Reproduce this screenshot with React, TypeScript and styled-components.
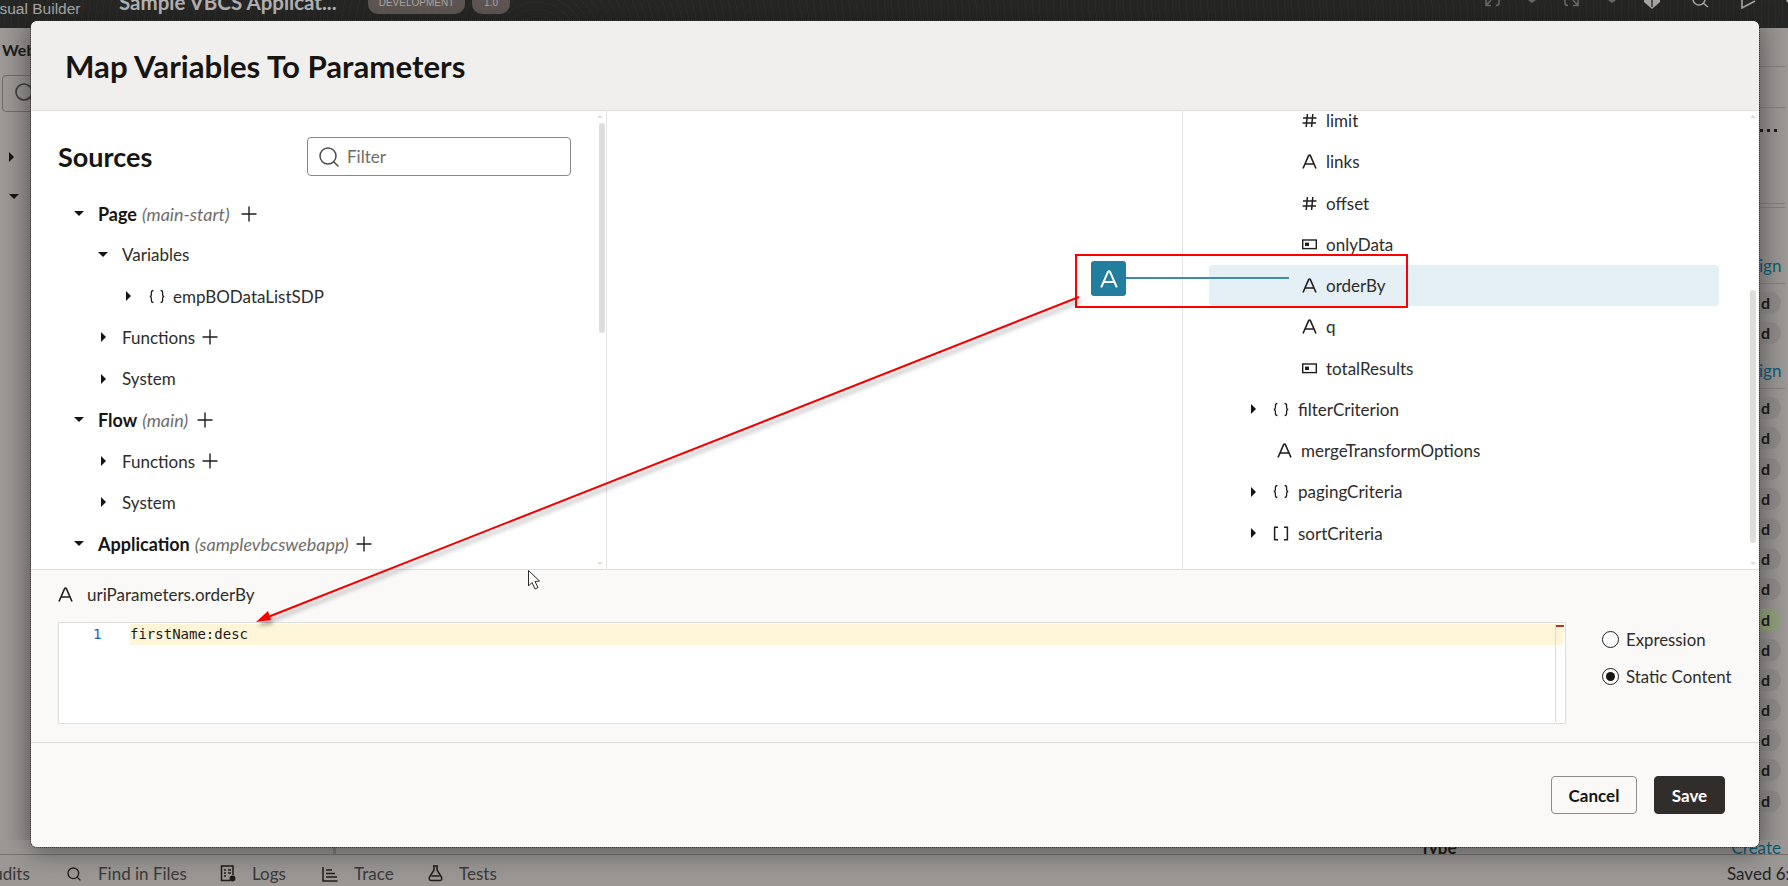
import styled, { createGlobalStyle } from 'styled-components';
import { Search } from 'lucide-react';

const GlobalStyle = createGlobalStyle`
  html, body { margin:0; padding:0; }
  body { font-family:Lato, "Noto Sans", sans-serif; background:#9a9795; }
`;

const Page = styled.div`
  position:relative;
  width:1788px;
  height:886px;
  overflow:hidden;
  display:flex;
  flex-direction:column;
  background:#9a9795;
`;

/* page behind the dialog */
const TopBar = styled.div`
  height:28px;
  flex:none;
  display:flex;
  align-items:flex-start;
  background:repeating-radial-gradient(circle at 30% 160%, #2b2b2a 0 1px, #262625 1px 7px);
  overflow:hidden;
`;

const Product = styled.span`
  font:15.5px/17px "Liberation Sans", sans-serif;
  color:#a8a6a4;
  margin-left:-14px;
  width:133px;
  flex:none;
`;

const AppName = styled.span`
  font-weight:700;
  font-size:20.5px;
  line-height:21px;
  margin-top:-8px;
  color:#b4b2b0;
  width:249px;
  flex:none;
`;

const EnvPill = styled.span<{ $w: number }>`
  width:${p => p.$w}px;
  height:24px;
  margin:-10px 7px 0 0;
  flex:none;
  display:flex;
  align-items:center;
  justify-content:center;
  border-radius:10px;
  background:#5e5652;
  color:#aaa5a1;
  font:10px "Liberation Sans", sans-serif;
`;

const TopIcons = styled.div`
  margin-left:auto;
  width:303px;
  flex:none;
  svg { display:block; }
`;

const Workspace = styled.div`
  flex:1;
  display:flex;
  flex-direction:column;
  min-height:0;
`;

const Gutters = styled.div`
  flex:1;
  display:flex;
  justify-content:space-between;
  min-height:0;
  overflow:hidden;
`;

const LeftGutter = styled.div`
  width:31px;
  overflow:hidden;
  padding:12px 0 0 2px;
  box-sizing:border-box;
  background:linear-gradient(90deg,#9c9997,#8d8a88);
`;

const Crumb = styled.div`
  font-weight:700;
  font-size:16px;
  line-height:20px;
  white-space:nowrap;
  color:#1c1b1a;
`;

const GhostSearch = styled.div`
  margin-top:15px;
  width:60px;
  height:37px;
  box-sizing:border-box;
  padding:5px 0 0 10px;
  border:1px solid #6d6a68;
  border-radius:4px;
  color:#3c3a38;
`;

const GutterCarets = styled.div`
  margin:40px 0 0 7px;
  display:flex;
  flex-direction:column;
  gap:32px;
`;

const RightGutter = styled.div`
  width:29px;
  overflow:hidden;
  box-sizing:border-box;
  background:linear-gradient(90deg,#8f8c8a,#9b9896);
  display:flex;
  flex-direction:column;
`;

const GutterLine = styled.div<{ $top: number }>`
  margin-top:${p => p.$top}px;
  height:1px;
  width:26px;
  flex:none;
  background:#807d7b;
`;

const Dots = styled.div`
  margin:21px 0 0 1px;
  display:flex;
  gap:4px;
  flex:none;
  i { width:3px; height:3px; background:#1c1b1a; }
`;

const LinkTail = styled.div<{ $top: number }>`
  margin-top:${p => p.$top}px;
  flex:none;
  font-size:17px;
  line-height:20px;
  color:#0c5a78;
`;

const Pills = styled.div`
  margin-top:8px;
  flex:none;
  display:flex;
  flex-direction:column;
  gap:8.2px;
`;

const Pill = styled.div<{ $green?: boolean }>`
  width:22px;
  height:22px;
  padding-left:2px;
  box-sizing:border-box;
  border-radius:0 11px 11px 0;
  background:${p => (p.$green ? '#8d9c78' : '#8b8886')};
  color:#1c1b1a;
  font-weight:700;
  font-size:16px;
  line-height:22px;
`;

const DetailStrip = styled.div`
  height:14px;
  flex:none;
  display:flex;
  align-items:center;
  overflow:hidden;
  border-bottom:1px solid #77746f;
  font-size:17px;
`;

const StripDivider = styled.div`
  width:336px;
  height:100%;
  border-right:3px solid #807d7b;
  box-sizing:border-box;
  flex:none;
`;

const StripType = styled.span`
  margin-left:1084px;
  font-weight:700;
  color:#1c1b1a;
`;

const StripCreate = styled.span`
  margin-left:auto;
  margin-right:7px;
  color:#0c5a78;
`;

const StatusBar = styled.div`
  height:31px;
  flex:none;
  box-sizing:border-box;
  padding-top:6px;
  display:flex;
  align-items:center;
  font-size:17px;
  color:#3b3937;
  background:#9a9795;
`;

const StatusTab = styled.span<{ $w: number; $cut?: number }>`
  width:${p => p.$w}px;
  margin-left:${p => p.$cut ?? 0}px;
  flex:none;
  display:flex;
  align-items:center;
  gap:16px;
  svg { flex:none; }
`;

const Saved = styled.span`
  margin-left:auto;
  white-space:nowrap;
  width:61px;
  overflow:hidden;
  color:#252422;
`;

/* dialog */
const DialogShadow = styled.div`
  position:absolute;
  left:31px;
  top:21px;
  width:1728px;
  height:826px;
  border-radius:6px;
  box-shadow:0 6px 26px rgba(0,0,0,.4);
`;

const Dialog = styled.div`
  position:absolute;
  left:31px;
  top:21px;
  width:1728px;
  height:826px;
  display:flex;
  flex-direction:column;
  border-radius:6px;
  overflow:hidden;
  background:#fff;
  outline:1px dotted #3a3836;
`;

const DialogHeader = styled.div`
  height:90px;
  flex:none;
  box-sizing:border-box;
  display:flex;
  align-items:center;
  padding:0 0 0 34px;
  background:#f0efed;
  border-bottom:1px solid #dfdedb;
`;

const DialogTitle = styled.h1`
  margin:0;
  font-weight:700;
  font-size:31.2px;
  color:#161513;
`;

const DialogBody = styled.div`
  height:458px;
  flex:none;
  display:flex;
`;

const Column = styled.div<{ $w: number; $line?: boolean }>`
  position:relative;
  width:${p => p.$w}px;
  flex:none;
  overflow:hidden;
  box-sizing:border-box;
  border-right:${p => (p.$line ? '1px solid #e4e3e1' : 'none')};
`;

const SourcesHead = styled.div`
  display:flex;
  align-items:center;
  justify-content:space-between;
  padding:26px 35px 0 27px;
  height:39px;
`;

const SourcesTitle = styled.h2`
  margin:0;
  font-weight:700;
  font-size:27px;
  color:#161513;
`;

const FilterBox = styled.div`
  width:264px;
  height:39px;
  box-sizing:border-box;
  display:flex;
  align-items:center;
  gap:6px;
  padding-left:9px;
  border:1px solid #8a8785;
  border-radius:4px;
  color:#4e4c4a;
  font-size:17px;
  span { color:#6f6d6b; }
`;

const TreeList = styled.div<{ $top: number }>`
  margin-top:${p => p.$top}px;
`;

const TreeRow = styled.div<{ $indent: number; $selected?: boolean; $wide?: boolean }>`
  height:41.25px;
  box-sizing:border-box;
  display:flex;
  align-items:center;
  padding-left:${p => p.$indent}px;
  margin-left:${p => (p.$wide ? 26 : 0)}px;
  width:${p => (p.$wide ? '510px' : 'auto')};
  font-size:17px;
  color:#2e2c2a;
  border-radius:4px;
  background:${p => (p.$selected ? '#e4f0f6' : 'transparent')};
`;

const CaretSlot = styled.span`
  width:24px;
  flex:none;
  display:flex;
  justify-content:center;
`;

const SourceCaretSlot = styled(CaretSlot)`
  margin-right:7px;
`;

const Caret = styled.i<{ $open?: boolean }>`
  display:block;
  width:0;
  height:0;
  border-style:solid;
  border-color:transparent;
  ${p => (p.$open
    ? 'border-width:5px 5px 0 5px; border-top-color:#161513;'
    : 'border-width:5px 0 5px 5px; border-left-color:#161513;')}
`;

const IconSlot = styled.span<{ $ml?: number; $mr?: number }>`
  display:flex;
  flex:none;
  margin-left:${p => p.$ml ?? 0}px;
  margin-right:${p => p.$mr ?? 9}px;
`;

const Strong = styled.b`
  font-weight:700;
  font-size:18px;
  color:#161513;
`;

const Muted = styled.em`
  margin-left:5px;
  font-size:18px;
  color:#6f6d6b;
`;

const AddIcon = styled.span<{ $ml?: number }>`
  display:flex;
  margin-left:${p => p.$ml ?? 7}px;
`;

const ScrollTrack = styled.div<{ $right: number; $top: number; $h: number }>`
  position:absolute;
  right:${p => p.$right}px;
  top:${p => p.$top}px;
  width:6px;
  height:${p => p.$h}px;
  border-radius:3px;
  background:#dedddb;
`;

const ScrollArrow = styled.i<{ $right: number; $down?: boolean }>`
  position:absolute;
  right:${p => p.$right}px;
  ${p => (p.$down ? 'bottom:4px;' : 'top:4px;')}
  width:0;
  height:0;
  border-style:solid;
  border-color:transparent;
  ${p => (p.$down
    ? 'border-width:3px 3px 0 3px; border-top-color:#dedddb;'
    : 'border-width:0 3px 3px 3px; border-bottom-color:#dedddb;')}
`;

const DialogFooter = styled.div`
  flex:1;
  display:flex;
  flex-direction:column;
  background:#faf9f7;
  border-top:1px solid #dfdedb;
`;

const ExpressionArea = styled.div`
  height:173px;
  flex:none;
  box-sizing:border-box;
  border-bottom:1px solid #dcdbd8;
  padding:13px 0 0 27px;
`;

const TargetName = styled.div`
  height:22px;
  display:flex;
  align-items:center;
  font-size:17px;
  color:#2e2c2a;
`;

const EditorRow = styled.div`
  margin-top:17px;
  display:flex;
`;

const Editor = styled.div`
  position:relative;
  width:1508px;
  height:102px;
  flex:none;
  box-sizing:border-box;
  padding-top:1px;
  display:flex;
  align-items:flex-start;
  background:#fff;
  border:1px solid #dfdedb;
`;

const LineNumber = styled.div`
  width:71px;
  flex:none;
  box-sizing:border-box;
  padding-left:34px;
  font:14px/21px "DejaVu Sans Mono", monospace;
  color:#1d5cc4;
`;

const CodeLine = styled.div`
  width:1433px;
  height:21px;
  font:14px/21px "DejaVu Sans Mono", monospace;
  color:#1a1918;
  background:#fff5d9;
`;

const OverviewRuler = styled.div`
  position:absolute;
  right:9px;
  top:1px;
  bottom:1px;
  width:1px;
  background:#dcdbd8;
  &::after {
    content:'';
    position:absolute;
    left:1px;
    top:1px;
    width:8px;
    height:2px;
    background:#a9382f;
  }
`;

const RadioGroup = styled.div`
  margin:7px 0 0 36px;
  display:flex;
  flex-direction:column;
  gap:16px;
`;

const RadioRow = styled.label`
  display:flex;
  align-items:center;
  gap:7px;
  height:21px;
  font-size:16.8px;
  color:#2e2c2a;
`;

const RadioMark = styled.span<{ $on?: boolean }>`
  width:17px;
  height:17px;
  box-sizing:border-box;
  border:1.5px solid #1f1e1c;
  border-radius:50%;
  background:#fff;
  display:flex;
  align-items:center;
  justify-content:center;
  &::after {
    content:'';
    width:9px;
    height:9px;
    border-radius:50%;
    background:${p => (p.$on ? '#161513' : 'transparent')};
  }
`;

const DialogActions = styled.div`
  display:flex;
  justify-content:flex-end;
  gap:17px;
  padding:33px 34px 0 0;
`;

const Button = styled.button<{ $primary?: boolean }>`
  height:38px;
  width:${p => (p.$primary ? 71 : 86)}px;
  border-radius:4px;
  border:1px solid ${p => (p.$primary ? '#312d2a' : '#8f8c89')};
  background:${p => (p.$primary ? '#312d2a' : 'transparent')};
  color:${p => (p.$primary ? '#fff' : '#161513')};
  font-family:inherit;
  font-weight:700;
  font-size:17px;
`;

/* mapping diagram + annotations on top of the dialog */
const MapNode = styled.div`
  position:absolute;
  left:1091px;
  top:261px;
  width:35px;
  height:35px;
  border-radius:3px;
  display:flex;
  align-items:center;
  justify-content:center;
  background:#227e9e;
`;

const MapLine = styled.div`
  position:absolute;
  left:1126px;
  top:277px;
  width:163px;
  height:2px;
  background:#3d8cab;
`;

const RedBox = styled.div`
  position:absolute;
  left:1075px;
  top:254px;
  width:333px;
  height:54px;
  box-sizing:border-box;
  border:2px solid #ff0000;
`;

const Overlay = styled.svg`
  position:absolute;
  left:0;
  top:0;
  pointer-events:none;
`;

const AGlyph = ({ color = '#1f1e1c', size = 15, w = 1.6 }: { color?: string; size?: number; w?: number }) => (
  <svg width={size} height={size} viewBox="0 0 15 15" fill="none" stroke={color} strokeWidth={w}>
    <path d="M1 14.5 L6.6 1.6 Q7.5 .4 8.4 1.6 L14 14.5 M3.4 10 H11.6" />
  </svg>
);

const HashGlyph = () => (
  <svg width="15" height="15" viewBox="0 0 15 15" fill="none" stroke="#1f1e1c" strokeWidth="1.5">
    <path d="M5.4 1 L4.2 14 M10.8 1 L9.6 14 M1 5 H14.5 M.6 10 H14" />
  </svg>
);

const DataGlyph = () => (
  <svg width="15" height="15" viewBox="0 0 15 15" fill="none">
    <rect x=".7" y="3" width="13.6" height="8.6" stroke="#1f1e1c" strokeWidth="1.4" />
    <rect x="3" y="5.6" width="4" height="3.4" fill="#1f1e1c" />
  </svg>
);

const BraceGlyph = () => (
  <svg width="16" height="15" viewBox="0 0 16 15" fill="none" stroke="#1f1e1c" strokeWidth="1.3">
    <path d="M4.4 1.5 Q2.4 1.5 2.4 3.4 V5.8 Q2.4 7.4 .8 7.5 Q2.4 7.6 2.4 9.2 V11.6 Q2.4 13.5 4.4 13.5" />
    <path d="M11.6 1.5 Q13.6 1.5 13.6 3.4 V5.8 Q13.6 7.4 15.2 7.5 Q13.6 7.6 13.6 9.2 V11.6 Q13.6 13.5 11.6 13.5" />
  </svg>
);

const BracketGlyph = () => (
  <svg width="16" height="15" viewBox="0 0 16 15" fill="none" stroke="#1f1e1c" strokeWidth="1.5">
    <path d="M5 1.2 H1.6 V13.8 H5 M11 1.2 H14.4 V13.8 H11" />
  </svg>
);

const PlusGlyph = () => (
  <svg width="16" height="16" viewBox="0 0 16 16" stroke="#1f1e1c" strokeWidth="1.4">
    <path d="M8 .5 V15.5 M.5 8 H15.5" />
  </svg>
);

const fieldIcons: Record<string, JSX.Element> = {
  hash: <HashGlyph />,
  text: <AGlyph />,
  data: <DataGlyph />,
};

const fields = [
  { name: 'limit', icon: 'hash' },
  { name: 'links', icon: 'text' },
  { name: 'offset', icon: 'hash' },
  { name: 'onlyData', icon: 'data' },
  { name: 'orderBy', icon: 'text', selected: true },
  { name: 'q', icon: 'text' },
  { name: 'totalResults', icon: 'data' },
];

const pillRows = [false, false, false, false, false, false, false, true, false, false, false, false, false, false];

export default function App() {
  return (
    <Page>
      <GlobalStyle />
      <TopBar>
        <Product>Visual Builder</Product>
        <AppName>Sample VBCS Applicat...</AppName>
        <EnvPill $w={97}>DEVELOPMENT</EnvPill>
        <EnvPill $w={38}>1.0</EnvPill>
        <TopIcons>
          <svg width="303" height="12" viewBox="0 0 303 12" fill="none">
            <g stroke="#6a6765" strokeWidth="1.6">
              <path d="M1 0 V5.5 H6 M1.5 5 L6 0 M14 0 V3 Q14 5.5 11 5.5" />
              <path d="M93 0 V5.5 H88 M92.5 5 L88 0 M80 0 V3 Q80 5.5 83 5.5" />
            </g>
            <path d="M43 0 L47 3 L51 0 Z M123 0 L127 3 L131 0 Z" fill="#6a6765" />
            <path d="M159 0 H175 V2 L167 9 L159 2 Z" fill="#a8a6a4" />
            <path d="M167 0 V7" stroke="#2a2a2a" strokeWidth="1.4" />
            <circle cx="214" cy="-1" r="6" stroke="#a8a6a4" strokeWidth="1.6" />
            <path d="M218 3 L223 7" stroke="#a8a6a4" strokeWidth="1.6" />
            <path d="M257 0 V8 L270 1" stroke="#a8a6a4" strokeWidth="1.6" />
            <circle cx="305" cy="-1" r="4" fill="#a8a6a4" />
          </svg>
        </TopIcons>
      </TopBar>
      <Workspace>
        <Gutters>
          <LeftGutter>
            <Crumb>Web</Crumb>
            <GhostSearch><Search size={24} strokeWidth={1.6} /></GhostSearch>
            <GutterCarets>
              <Caret />
              <Caret $open />
            </GutterCarets>
          </LeftGutter>
          <RightGutter>
            <GutterLine $top={38} />
            <GutterLine $top={40} />
            <Dots><i /><i /><i /></Dots>
            <GutterLine $top={71} />
            <GutterLine $top={3} />
            <LinkTail $top={48}>ign</LinkTail>
            <GutterLine $top={7} />
            <Pills>
              {pillRows.slice(0, 2).map((g, i) => <Pill key={i} $green={g}>d</Pill>)}
            </Pills>
            <LinkTail $top={17}>ign</LinkTail>
            <GutterLine $top={7} />
            <Pills>
              {pillRows.map((g, i) => <Pill key={i} $green={g}>d</Pill>)}
            </Pills>
          </RightGutter>
        </Gutters>
        <DetailStrip>
          <StripDivider />
          <StripType>Type</StripType>
          <StripCreate>Create</StripCreate>
        </DetailStrip>
      </Workspace>
      <StatusBar>
        <StatusTab $w={84} $cut={-18}>Audits</StatusTab>
        <StatusTab $w={154}>
          <Search size={16} strokeWidth={2} color="#1f1e1c" />
          Find in Files
        </StatusTab>
        <StatusTab $w={102}>
          <svg width="16" height="17" viewBox="0 0 16 17" fill="none" stroke="#1f1e1c" strokeWidth="1.5">
            <path d="M10 15.5 H1.5 V1 H13 V10" />
            <path d="M4 5 H6 M8 5 H11 M4 8 H6 M8 8 H11 M4 11 H6" />
            <circle cx="12.5" cy="13.5" r="2.2" fill="#1f1e1c" />
          </svg>
          Logs
        </StatusTab>
        <StatusTab $w={106}>
          <svg width="16" height="16" viewBox="0 0 16 16" fill="none" stroke="#1f1e1c" strokeWidth="1.5">
            <path d="M1 1 V15 H15.5 M4 4 H10 M4 7.5 H13 M4 11 H15" />
          </svg>
          Trace
        </StatusTab>
        <StatusTab $w={100}>
          <svg width="15" height="17" viewBox="0 0 15 17" fill="none" stroke="#1f1e1c" strokeWidth="1.5">
            <path d="M5 1 H10 M6 1 V5 L1.5 12 Q.5 15.5 3.5 15.5 H11.5 Q14.5 15.5 13.5 12 L9 5 V1 M3.5 11 H11.5" />
          </svg>
          Tests
        </StatusTab>
        <Saved>Saved 6:</Saved>
      </StatusBar>

      <DialogShadow />
      <Dialog>
        <DialogHeader>
          <DialogTitle>Map Variables To Parameters</DialogTitle>
        </DialogHeader>
        <DialogBody>
          <Column $w={576} $line>
            <SourcesHead>
              <SourcesTitle>Sources</SourcesTitle>
              <FilterBox>
                <Search size={24} strokeWidth={1.5} />
                <span>Filter</span>
              </FilterBox>
            </SourcesHead>
            <TreeList $top={17}>
              <TreeRow $indent={36}>
                <SourceCaretSlot><Caret $open /></SourceCaretSlot>
                <Strong>Page</Strong><Muted>(main-start)</Muted>
                <AddIcon $ml={11}><PlusGlyph /></AddIcon>
              </TreeRow>
              <TreeRow $indent={60}>
                <SourceCaretSlot><Caret $open /></SourceCaretSlot>
                Variables
              </TreeRow>
              <TreeRow $indent={85}>
                <CaretSlot><Caret /></CaretSlot>
                <IconSlot $ml={9} $mr={8}><BraceGlyph /></IconSlot>
                empBODataListSDP
              </TreeRow>
              <TreeRow $indent={60}>
                <SourceCaretSlot><Caret /></SourceCaretSlot>
                Functions
                <AddIcon><PlusGlyph /></AddIcon>
              </TreeRow>
              <TreeRow $indent={60}>
                <SourceCaretSlot><Caret /></SourceCaretSlot>
                System
              </TreeRow>
              <TreeRow $indent={36}>
                <SourceCaretSlot><Caret $open /></SourceCaretSlot>
                <Strong>Flow</Strong><Muted>(main)</Muted>
                <AddIcon $ml={9}><PlusGlyph /></AddIcon>
              </TreeRow>
              <TreeRow $indent={60}>
                <SourceCaretSlot><Caret /></SourceCaretSlot>
                Functions
                <AddIcon><PlusGlyph /></AddIcon>
              </TreeRow>
              <TreeRow $indent={60}>
                <SourceCaretSlot><Caret /></SourceCaretSlot>
                System
              </TreeRow>
              <TreeRow $indent={36}>
                <SourceCaretSlot><Caret $open /></SourceCaretSlot>
                <Strong>Application</Strong><Muted>(samplevbcswebapp)</Muted>
                <AddIcon><PlusGlyph /></AddIcon>
              </TreeRow>
            </TreeList>
            <ScrollArrow $right={3} />
            <ScrollTrack $right={1} $top={12} $h={210} />
            <ScrollArrow $right={3} $down />
          </Column>
          <Column $w={576} $line />
          <Column $w={576}>
            <TreeList $top={-11}>
              {fields.map(f => (
                <TreeRow key={f.name} $wide $indent={93} $selected={f.selected}>
                  <IconSlot>{fieldIcons[f.icon]}</IconSlot>
                  {f.name}
                </TreeRow>
              ))}
              <TreeRow $wide $indent={32}>
                <CaretSlot><Caret /></CaretSlot>
                <IconSlot $ml={8} $mr={9}><BraceGlyph /></IconSlot>
                filterCriterion
              </TreeRow>
              <TreeRow $wide $indent={68}>
                <IconSlot><AGlyph /></IconSlot>
                mergeTransformOptions
              </TreeRow>
              <TreeRow $wide $indent={32}>
                <CaretSlot><Caret /></CaretSlot>
                <IconSlot $ml={8} $mr={9}><BraceGlyph /></IconSlot>
                pagingCriteria
              </TreeRow>
              <TreeRow $wide $indent={32}>
                <CaretSlot><Caret /></CaretSlot>
                <IconSlot $ml={8} $mr={9}><BracketGlyph /></IconSlot>
                sortCriteria
              </TreeRow>
            </TreeList>
            <ScrollArrow $right={3} />
            <ScrollTrack $right={3} $top={179} $h={253} />
            <ScrollArrow $right={3} $down />
          </Column>
        </DialogBody>
        <DialogFooter>
          <ExpressionArea>
            <TargetName>
              <IconSlot $mr={14}><AGlyph /></IconSlot>
              uriParameters.orderBy
            </TargetName>
            <EditorRow>
              <Editor>
                <LineNumber>1</LineNumber>
                <CodeLine>firstName:desc</CodeLine>
                <OverviewRuler />
              </Editor>
              <RadioGroup>
                <RadioRow><RadioMark />Expression</RadioRow>
                <RadioRow><RadioMark $on />Static Content</RadioRow>
              </RadioGroup>
            </EditorRow>
          </ExpressionArea>
          <DialogActions>
            <Button>Cancel</Button>
            <Button $primary>Save</Button>
          </DialogActions>
        </DialogFooter>
      </Dialog>

      <MapLine />
      <MapNode><AGlyph color="#fff" size={18} w={1.7} /></MapNode>
      <RedBox />
      <Overlay width="1788" height="886" viewBox="0 0 1788 886" fill="none">
        <defs>
          <filter id="arrowShadow" x="-5%" y="-5%" width="110%" height="120%">
            <feDropShadow dx="2" dy="4" stdDeviation="2" floodColor="#000" floodOpacity=".35" />
          </filter>
        </defs>
        <g filter="url(#arrowShadow)">
          <path d="M1079 297 L268 617" stroke="#f40000" strokeWidth="2" />
          <path d="M256 622 L268 611 L271 620 Z" fill="#f40000" />
        </g>
        <path d="M528.5 570.5 V586 L532 582.5 L535 589 L538 587.5 L535 581.5 L539.5 581 Z" fill="#fff" stroke="#2a2a2a" strokeWidth="1" />
      </Overlay>
    </Page>
  );
}
